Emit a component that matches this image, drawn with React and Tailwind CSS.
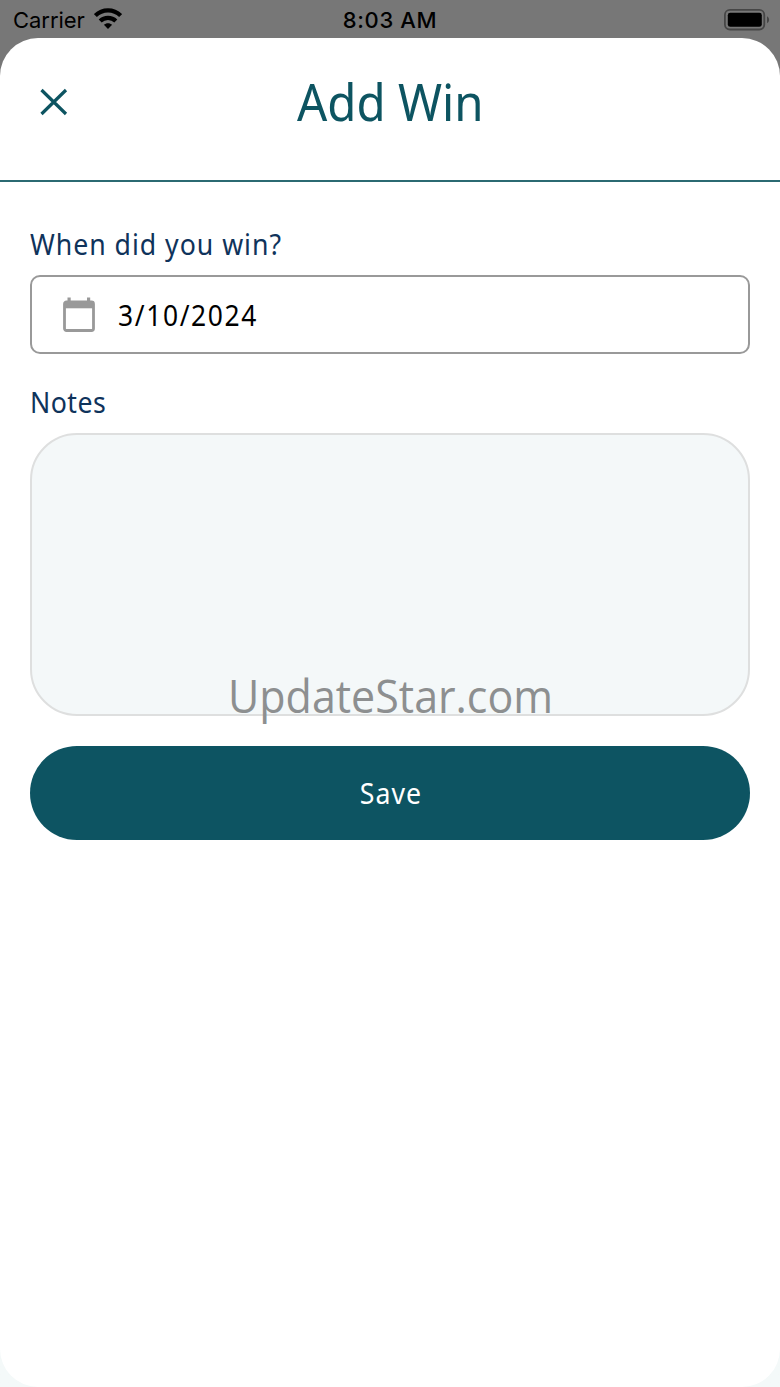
import { useState } from "react";

function WifiIcon() {
    return (
        <svg width="28" height="21" viewBox="0 0 28 21" className="ml-[9px] mb-[2px]" fill="none" stroke="#000" strokeWidth="4.2">
            <path d="M1.4 7.6C8.4 0.7 19.6 0.7 26.6 7.6" />
            <path d="M6.2 13C10.4 8.8 17.6 8.8 21.8 13" />
            <path d="M14 20.9L9.9 16.8C12.2 14.6 15.8 14.6 18.1 16.8Z" fill="#000" stroke="none" />
        </svg>
    );
}

function BatteryIcon() {
    return (
        <svg width="46" height="22" viewBox="0 0 46 22">
            <rect x="0.9" y="0.9" width="39.4" height="19.6" rx="5" fill="none" stroke="#464646" strokeWidth="1.8" />
            <rect x="3.8" y="3.8" width="34" height="14" rx="2.4" fill="#000" />
            <path d="M43 7.2C45.8 8.6 45.8 12.8 43 14.2Z" fill="#464646" />
        </svg>
    );
}

function CalendarIcon() {
    return (
        <svg width="32" height="36" viewBox="0 0 32 36">
            <path d="M4.5 0.5h3.2v4H4.5zM24 0.5h3.2v4H24z" fill="#999" />
            <rect x="1.5" y="5" width="29" height="28.5" rx="2" fill="none" stroke="#999" strokeWidth="2.8" />
            <path d="M2 5h28v6.3H2z" fill="#999" />
        </svg>
    );
}

function StatusBar() {
    return (
        <div className="grid grid-cols-3 items-center h-[38px] pl-[13px] pr-[10px] font-['Inter',sans-serif] text-[22px] leading-[38px] text-black">
            <div className="flex items-center">
                <span className="tracking-[-0.05px] pt-px">Carrier</span>
                <WifiIcon />
            </div>
            <span className="text-center font-medium tracking-[0.6px] pr-[3px] pt-px">8:03 AM</span>
            <div className="flex justify-end">
                <BatteryIcon />
            </div>
        </div>
    );
}

function Label({ htmlFor, className, children }) {
    return (
        <label htmlFor={htmlFor} className={`origin-left scale-x-92 text-[29px] leading-[40px] text-[#0f335b] ${className}`}>
            {children}
        </label>
    );
}

function App() {
    const [date, setDate] = useState("3/10/2024");
    const [notes, setNotes] = useState("");

    return (
        <div className="h-[1387px] w-[780px] overflow-hidden bg-linear-to-b from-[#777] from-50% to-[#f4f9f9] to-50% font-['Noto_Sans',sans-serif]">
            <StatusBar />

            <main className="relative h-[1349px] rounded-[38px] bg-white">
                <header className="grid h-[144px] grid-cols-[1fr_auto_1fr] border-b-2 border-[#2b6a72] px-[40px]">
                    <button type="button" aria-label="Close" className="mt-[50px] h-[28px] w-[28px]">
                        <svg width="28" height="28" viewBox="0 0 28 28" stroke="#0d5461" strokeWidth="3.2">
                            <path d="M1.5 2L26 26M26 2L1.5 26" />
                        </svg>
                    </button>
                    <h1 className="mt-[28px] scale-x-93 text-[51px] leading-[70px] text-[#0d5461]">Add Win</h1>
                </header>

                <form className="flex flex-col px-[30px] pt-[42px]" onSubmit={e => e.preventDefault()}>
                    <Label htmlFor="date" className="h-[51px] tracking-[1.05px]">When did you win?</Label>
                    <div className="flex h-[79px] items-center rounded-[10px] border-2 border-[#999] pl-[31px]">
                        <CalendarIcon />
                        <input
                            id="date"
                            value={date}
                            onChange={e => setDate(e.target.value)}
                            className="ml-[23px] w-[400px] origin-left scale-x-91 text-[29px] leading-[40px] tracking-[1.8px] text-black outline-none"
                        />
                    </div>

                    <Label htmlFor="notes" className="mt-[28px] h-[51px] tracking-[0.5px]">Notes</Label>
                    <textarea
                        id="notes"
                        value={notes}
                        onChange={e => setNotes(e.target.value)}
                        className="h-[283px] resize-none rounded-[47px] border-2 border-[#dedfdf] bg-[#f4f8f9] p-8 text-[28px] outline-none"
                    />

                    <button type="submit" className="mt-[30px] h-[94px] rounded-full bg-[#0d5462] text-[29px] text-white">
                        <span className="inline-block scale-x-92 pl-[2px] tracking-[1.2px]">Save</span>
                    </button>
                </form>

                {/* Watermark */}
                <div className="pointer-events-none absolute left-[228px] top-[628px] origin-left scale-x-[0.955] whitespace-nowrap font-['Open_Sans',sans-serif] text-[45px] leading-[60px] text-[#8d8f90]">
                    UpdateStar.com
                </div>
            </main>
        </div>
    );
}

export default App;
